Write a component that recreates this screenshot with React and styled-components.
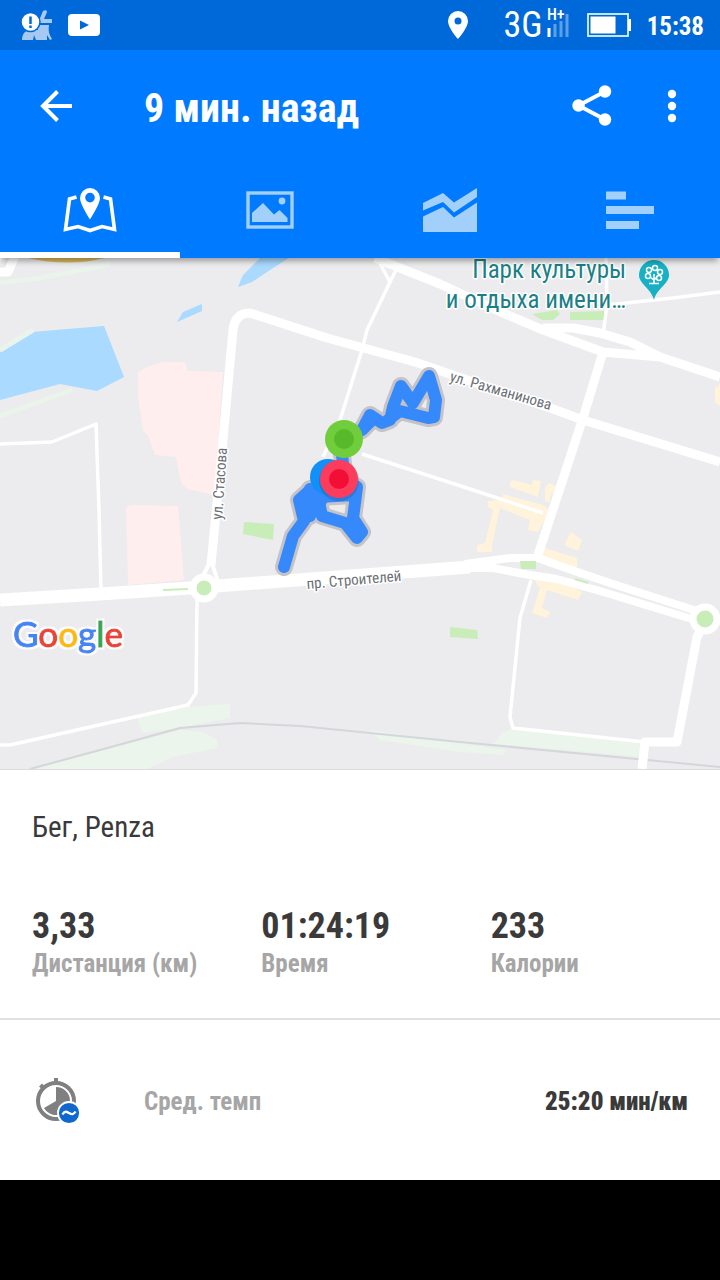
import React, { useState } from 'react';
import styled, { createGlobalStyle } from 'styled-components';

const GlobalStyle = createGlobalStyle`
  * {
    box-sizing: border-box;
  }
  body {
    margin: 0;
    background-color: #000;
    font-family: "Roboto Condensed", "Liberation Sans Narrow", Roboto, sans-serif;
  }
  button {
    padding: 0;
    border: none;
    background: none;
    color: inherit;
    font: inherit;
    cursor: pointer;
  }
  svg {
    display: block;
  }
`;

const Page = styled.div`
  width: 100%;
  background-color: #fff;
`;

const StatusBar = styled.div`
  height: 50px;
  padding: 0 16px 0 20px;
  display: flex;
  align-items: center;
  justify-content: space-between;
  background-color: #0069d9;
  color: #fff;
`;

const StatusGroup = styled.div`
  display: flex;
  align-items: center;
  gap: ${(props) => props.$gap}px;
`;

const Network = styled.div`
  position: relative;
  display: flex;
  align-items: center;
  font-size: 36px;
  line-height: 50px;
  font-weight: normal;
  span {
    position: absolute;
    top: 7px;
    right: 4px;
    font-size: 16px;
    line-height: 16px;
    font-weight: 500;
  }
`;

const Clock = styled.time`
  padding-top: 4px;
  font-size: 25px;
  line-height: 48px;
  font-weight: bold;
`;

const Header = styled.header`
  position: relative;
  z-index: 1;
  background-color: #007aff;
  color: #fff;
  box-shadow: 0 5px 6px -2px rgba(0, 0, 0, 0.35);
`;

const Toolbar = styled.div`
  height: 112px;
  padding: 0 24px 0 32px;
  display: flex;
  align-items: center;
  h1 {
    flex: 1;
    margin: 0;
    padding: 6px 0 0 64px;
    font-size: 40px;
    line-height: 48px;
    font-weight: bold;
  }
`;

const IconButton = styled.button`
  width: 48px;
  height: 48px;
  margin-left: ${(props) => props.$gap || 0}px;
`;

const Tabs = styled.nav`
  display: flex;
`;

const Tab = styled.button`
  flex: 1;
  height: 96px;
  display: flex;
  align-items: center;
  justify-content: center;
  color: ${(props) => props.$active ? "#fff" : "#a3cffb"};
  box-shadow: ${(props) => props.$active ? "inset 0 -6px 0 #fff" : "none"};
`;

const MapBox = styled.div`
  background-color: #ecebed;
  border-bottom: 1px solid #dcdcde;
  svg {
    width: 100%;
    height: auto;
  }
`;

const Summary = styled.section`
  padding: 36px 0 38px 32px;
  border-bottom: 2px solid #e0e0e0;
  h2 {
    margin: 0 0 56px;
    font-size: 29px;
    line-height: 42px;
    font-weight: normal;
    color: #3a3a3a;
  }
`;

const Stats = styled.dl`
  margin: 0;
  display: grid;
  grid-template-columns: repeat(3, 1fr);
`;

const Stat = styled.div`
  display: flex;
  flex-direction: column-reverse;
  font-weight: bold;
  dt {
    font-size: 25px;
    line-height: 32px;
    color: #a6a6a6;
  }
  dd {
    margin: 0;
    font-size: 36px;
    line-height: 44px;
    color: #3a3a3a;
  }
`;

const PaceRow = styled.section`
  height: 160px;
  padding: 0 32px;
  display: flex;
  align-items: center;
  font-size: 25px;
  line-height: 32px;
  font-weight: bold;
  color: #a6a6a6;
  span,
  strong {
    padding-top: 4px;
  }
  strong {
    margin-left: auto;
    color: #3a3a3a;
  }
`;

const PaceLabel = styled.span`
  padding-left: 64px;
`;

const MapText = styled.text`
  font-size: ${(props) => props.$size || 15}px;
  fill: ${(props) => props.$color || "#6b7075"};
  stroke: #fff;
  stroke-width: 3px;
  stroke-linejoin: round;
  paint-order: stroke;
`;

const LogoText = styled.text`
  font-family: Lato, sans-serif;
  font-size: 35px;
  tspan {
    fill: var(--letter);
    stroke: var(--letter);
    stroke-width: 1px;
  }
  .blue {
    --letter: #4285f4;
  }
  .red {
    --letter: #ea4335;
  }
  .yellow {
    --letter: #fbbc05;
  }
  .green {
    --letter: #34a853;
  }
`;

const WarningIcon = () => (
  <svg width="34" height="32" viewBox="0 0 34 32">
    <path d="M2 31c0-6 3-9 7-10h9V14l5-12c2-1 4-1 4 1l-3 7h8v4H20v2h9c-1 5 0 10 3 14l-2 1-3-5v5H16l-2-5-1 5z" fill="#a6c9f2" />
    <circle cx="10.500" cy="13" r="9.500" fill="#fff" stroke="#0069d9" strokeWidth="1.500" />
    <path d="M10.500 7.500v7.500M10.500 16.500v2.500" stroke="#0069d9" strokeWidth="2.500" />
  </svg>
);

const PlayIcon = () => (
  <svg width="32" height="24" viewBox="0 0 32 24">
    <rect y="1" width="32" height="22" rx="4" fill="#fff" />
    <path d="M12 7.500v9l9-4.500z" fill="#0069d9" />
  </svg>
);

const PinIcon = () => (
  <svg width="20" height="28" viewBox="0 0 20 28">
    <path fillRule="evenodd" d="M10 0a10 10 0 0 0-10 10c0 7 10 18 10 18s10-11 10-18A10 10 0 0 0 10 0zm0 6.500a3.500 3.500 0 1 1 0 7 3.500 3.500 0 0 1 0-7z" fill="#fff" />
  </svg>
);

const SignalIcon = () => (
  <svg width="26" height="24" viewBox="0 0 26 24">
    <path d="M6 15v9" stroke="#fff" strokeWidth="3" />
    <path d="M12 11v13M18 8v16M24 1v23" stroke="#5e9fe6" strokeWidth="3" />
  </svg>
);

const BatteryIcon = () => (
  <svg width="44" height="24" viewBox="0 0 44 24">
    <rect x="1" y="1" width="40" height="22" fill="none" stroke="#d9f3ff" strokeWidth="1.800" />
    <rect x="3.500" y="3.500" width="25" height="17" fill="#fff" />
    <path d="M42.500 6v12" stroke="#fff" strokeWidth="3" />
  </svg>
);

const BackIcon = () => (
  <svg width="48" height="48" viewBox="0 0 48 48" fill="none" stroke="#fff" strokeWidth="4">
    <path d="M40 24H11M25.500 9.500L11 24l14.500 14.500" />
  </svg>
);

const ShareIcon = () => (
  <svg width="48" height="48" viewBox="0 0 48 48" fill="#fff">
    <path d="M37 9.500L10.500 23.500 37 37.500" fill="none" stroke="#fff" strokeWidth="4" />
    <circle cx="37" cy="9.500" r="6.200" />
    <circle cx="10.500" cy="23.500" r="6.200" />
    <circle cx="37" cy="37.500" r="6.200" />
  </svg>
);

const MoreIcon = () => (
  <svg width="48" height="48" viewBox="0 0 48 48" fill="#fff">
    <circle cx="24" cy="12" r="4.200" />
    <circle cx="24" cy="24" r="4.200" />
    <circle cx="24" cy="36" r="4.200" />
  </svg>
);

const MapIcon = () => (
  <svg width="60" height="60" viewBox="0 0 60 60" fill="currentColor">
    <path d="M16.500 17l-7 2L5.500 49.500l12.500-3 12 4 12-4 12.500 3-4-30.500-7-2" fill="none" stroke="currentColor" strokeWidth="3.600" />
    <path fillRule="evenodd" d="M30 8a10 10 0 0 0-10 10c0 6 10 21.500 10 21.500S40 24 40 18A10 10 0 0 0 30 8zm0 4.800a4.800 4.800 0 1 1 0 9.600 4.800 4.800 0 0 1 0-9.600z" />
  </svg>
);

const PhotoIcon = () => (
  <svg width="60" height="60" viewBox="0 0 60 60" fill="currentColor">
    <rect x="8" y="13" width="44" height="34" fill="none" stroke="currentColor" strokeWidth="3.400" />
    <path d="M12 42v-9l11-10 11 11.500 5.500-4.500 8 8v4z" />
    <circle cx="42" cy="21" r="3.400" />
  </svg>
);

const ChartIcon = () => (
  <svg width="60" height="60" viewBox="0 0 60 60" fill="currentColor">
    <path d="M3 23l20-10 11 9.500L57 8v9L34 32.500 23 22 3 30.500z" />
    <path d="M3 36.500L23 27l11 10.500 23-15V52H3z" />
  </svg>
);

const SplitsIcon = () => (
  <svg width="60" height="60" viewBox="0 0 60 60" fill="currentColor">
    <path d="M6 11.500h20v8H6zM6 26h48v8H6zM6 41h33v8H6z" />
  </svg>
);

const PaceIcon = () => (
  <svg width="48" height="48" viewBox="0 0 48 48">
    <circle cx="24" cy="25" r="18" fill="none" stroke="#808080" strokeWidth="4" />
    <path d="M24 2v5M8.500 9l4 4" stroke="#808080" strokeWidth="4" />
    <path d="M24 25V11a14 14 0 1 1-12 21z" fill="#808080" />
    <circle cx="37" cy="37" r="11" fill="#1068cf" stroke="#fff" strokeWidth="1.800" />
    <path d="M30.500 38.500c2-4 4-3 6.500-1.500s4.500 2 6.500-1.500" fill="none" stroke="#fff" strokeWidth="2.400" />
  </svg>
);

const TrackMap = () => (
  <svg viewBox="0 258 720 511" role="img" aria-label="Карта маршрута">
    <defs>
      <filter id="logoHalo" x="-10%" y="-20%" width="120%" height="140%">
        <feMorphology in="SourceAlpha" operator="dilate" radius="2" result="wide" />
        <feFlood floodColor="#fff" floodOpacity="0.850" />
        <feComposite in2="wide" operator="in" result="halo" />
        <feMerge>
          <feMergeNode in="halo" />
          <feMergeNode in="SourceGraphic" />
        </feMerge>
      </filter>
    </defs>
    <g fill="#aadaff">
      <path d="M0 352L32 332 104 326 124 377 97 391 60 384 0 400z" />
      <path d="M177 322L183 312 202 304V311z" />
      <path d="M238 287L243 275 262 256H292L270 270 252 282z" />
    </g>
    <g fill="#ffeeed">
      <path d="M138 372L147 367 163 362H185L188 371 223 372 214 495 187 489 181 483 176 457 155 455 148 435 143 431 138 397z" />
      <path d="M126 508L130 505 178 506 184 580 128 585z" />
    </g>
    <g fill="#ebf5ec">
      <path d="M137 717L187 707 230 704V718L180 728 142 733z" />
      <path d="M33 769L180 730 203 732 217 740V748L173 757 147 769z" />
      <path d="M503 732L513 728 643 743 642 757 493 744z" />
      <path d="M370 730L460 743 507 750 503 755 460 752 380 740z" />
    </g>
    <g fill="none" stroke="#eaf4eb" strokeWidth="5">
      <path d="M0 283Q50 278 110 264M0 416L72 390M0 350L33 330" />
    </g>
    <path d="M23 257Q70 268 108 257z" fill="#dcb95c" />
    <g fill="#fff3db">
      <path d="M510 482L513 480 532 485 533 480 541 481 538 497 510 487z" />
      <path d="M545 488L549 483 556 486 555 491 551 495 549 503 545 501z" />
      <path d="M503 494L543 505 550 510 538 532 528 530 530 520 500 508 492 545V552H477V545L485 543 493 510 488 507V501L502 500z" />
      <path d="M571 532L582 540 578 551 564 545z" />
      <path d="M545 548L577 558V568L560 567 536 562z" />
      <path d="M533 578H557L582 592 578 600 547 590 542 608 550 612 547 618 532 613 540 588z" />
      <path d="M720 384L715 388V403L720 406z" />
    </g>
    <g fill="#c8edb8">
      <path d="M244 522L274 524 273 540 243 534z" />
      <path d="M450 627L477 630 478 639 450 637z" />
      <path d="M532 314L557 310 560 314 553 320H542z" />
      <path d="M570 312L606 311 605 320H570z" />
    </g>
    <path d="M30 769L100 750 180 728 240 723 300 726 460 742 543 750 720 767" fill="none" stroke="#d3d7da" strokeWidth="2" />
    <g fill="none" stroke="#fff" strokeLinejoin="round">
      <g strokeWidth="3.500">
        <path d="M0 444L52 442 96 424 99 510 101 590" />
        <path d="M197 600L196 693 188 705 10 745H0" />
        <path d="M377 258L390 282 367 330 362 350 340 420 323 457M397 268L390 282" />
        <path d="M362 454L470 489 543 513" />
        <path d="M606 258L607 305 603 335M607 305L673 298 720 292" />
        <path d="M531 580L520 618 510 717 513 728 645 742" />
      </g>
      <g strokeWidth="9">
        <path d="M0 272H8L15 256" />
        <path d="M211 565L222 450 233 330Q235 313 250 313L327 338 415 362 470 381 553 409 583 420 720 462" />
        <path d="M375 258L440 284 503 313 543 330 603 352 660 357 720 377" />
        <path d="M543 328L573 328 600 333 630 342 660 357" />
        <path d="M603 352L583 418 538 555" />
        <path d="M704 625L697 637 677 742H645L642 769M705 618L720 622" />
      </g>
      <path d="M0 600L100 594 204 587 470 567" strokeWidth="13" />
      <path d="M211 560L202 578M211 560L218 582" strokeWidth="4" />
      <path d="M465 564L510 558 538 558 560 566 610 583 700 612" strokeWidth="8" />
      <path d="M465 568L493 568 530 575 557 579 600 591 695 620" strokeWidth="8" />
    </g>
    <path d="M520 561H536V569H521z" fill="#c8edb8" />
    <path d="M163 590L188 589M575 579L588 583" stroke="#c8edb8" strokeWidth="2" />
    <g fill="#c8edb8" stroke="#fff" strokeWidth="7">
      <circle cx="204" cy="588" r="11" />
      <circle cx="705" cy="619" r="12" />
    </g>

    <MapText transform="translate(449 381) rotate(16)">ул. Рахманинова</MapText>
    <MapText transform="translate(222 520) rotate(-86)">ул. Стасова</MapText>
    <MapText transform="translate(307 589) rotate(-5)">пр. Строителей</MapText>
    <MapText x="626" y="278" textAnchor="end" $size={25} $color="#1b7f87">Парк культуры</MapText>
    <MapText x="626" y="308" textAnchor="end" $size={25} $color="#1b7f87">и отдыха имени…</MapText>

    <path d="M654 260a15 15 0 0 0-15 15c0 9 12 13 15 25 3-12 15-16 15-25a15 15 0 0 0-15-15z" fill="#18b0c4" />
    <g fill="none" stroke="#fff" strokeWidth="1.500">
      <circle cx="648" cy="276" r="2.500" />
      <circle cx="649" cy="270" r="2.500" />
      <circle cx="655" cy="268" r="2.500" />
      <circle cx="660" cy="272" r="2.500" />
      <circle cx="659" cy="278" r="2.500" />
      <path d="M654 284v-10M650 277l4 3 3-3M649 283.500h10" />
    </g>

    {[["#c3c3c8", 18], ["#3589fb", 12]].map(([color, width]) => (
      <g key={color} fill="none" stroke={color} strokeWidth={width} strokeLinejoin="round" strokeLinecap="round">
        <path d="M344 439L362 430 370 415 382 423 390 420 393 407 401 386 413 403 429 376 436 400 434 417 428 418 400 411 388 420M362 430L371 421" />
        <path d="M342 455L345 480 357 487 355 503 353 518 362 532 357 538 345 523 322 516 318 497 354 495M310 489L308 492 299 500 304 521 293 536 284 567M307 494L310 516" />
      </g>
    ))}
    <path d="M304 490H322L320 512 310 522 298 536z" fill="#3589fb" />
    <path d="M314 486H358L354 499 328 501 320 514 312 500z" fill="#3589fb" />

    <circle cx="328" cy="477" r="18" fill="#1190f8" />
    <circle cx="339" cy="481" r="20" fill="#16365f" opacity="0.200" />
    <circle cx="339" cy="479" r="19" fill="#fb3c5d" />
    <circle cx="339" cy="479" r="10" fill="#f20f36" />
    <circle cx="344" cy="439" r="19" fill="#70ce3c" />
    <circle cx="344" cy="439" r="10" fill="#58b92b" />

    <LogoText x="13" y="647" filter="url(#logoHalo)">
      <tspan className="blue">G</tspan>
      <tspan className="red">o</tspan>
      <tspan className="yellow">o</tspan>
      <tspan className="blue">g</tspan>
      <tspan className="green">l</tspan>
      <tspan className="red">e</tspan>
    </LogoText>
  </svg>
);

const tabs = [
  { id: "map", label: "Карта", Icon: MapIcon },
  { id: "photo", label: "Фото", Icon: PhotoIcon },
  { id: "chart", label: "Графики", Icon: ChartIcon },
  { id: "splits", label: "Отрезки", Icon: SplitsIcon },
];

const stats = [
  { label: "Дистанция (км)", value: "3,33" },
  { label: "Время", value: "01:24:19" },
  { label: "Калории", value: "233" },
];

const App = () => {
  const [active, setActive] = useState("map");

  return (
    <Page>
      <GlobalStyle />
      <StatusBar>
        <StatusGroup $gap={14}>
          <WarningIcon />
          <PlayIcon />
        </StatusGroup>
        <StatusGroup $gap={16}>
          <StatusGroup $gap={36}>
            <PinIcon />
            <StatusGroup $gap={18}>
              <Network>
                3G
                <SignalIcon />
                <span>H+</span>
              </Network>
              <BatteryIcon />
            </StatusGroup>
          </StatusGroup>
          <Clock>15:38</Clock>
        </StatusGroup>
      </StatusBar>
      <Header>
        <Toolbar>
          <IconButton aria-label="Назад"><BackIcon /></IconButton>
          <h1>9 мин. назад</h1>
          <IconButton aria-label="Поделиться"><ShareIcon /></IconButton>
          <IconButton aria-label="Ещё" $gap={32}><MoreIcon /></IconButton>
        </Toolbar>
        <Tabs>
          {tabs.map(({ id, label, Icon }) => (
            <Tab key={id} aria-label={label} $active={active === id} onClick={() => setActive(id)}>
              <Icon />
            </Tab>
          ))}
        </Tabs>
      </Header>
      <MapBox>
        <TrackMap />
      </MapBox>
      <Summary>
        <h2>Бег, Penza</h2>
        <Stats>
          {stats.map((stat) => (
            <Stat key={stat.label}>
              <dt>{stat.label}</dt>
              <dd>{stat.value}</dd>
            </Stat>
          ))}
        </Stats>
      </Summary>
      <PaceRow>
        <PaceIcon />
        <PaceLabel>Сред. темп</PaceLabel>
        <strong>25:20 мин/км</strong>
      </PaceRow>
    </Page>
  )
}

export default App;
